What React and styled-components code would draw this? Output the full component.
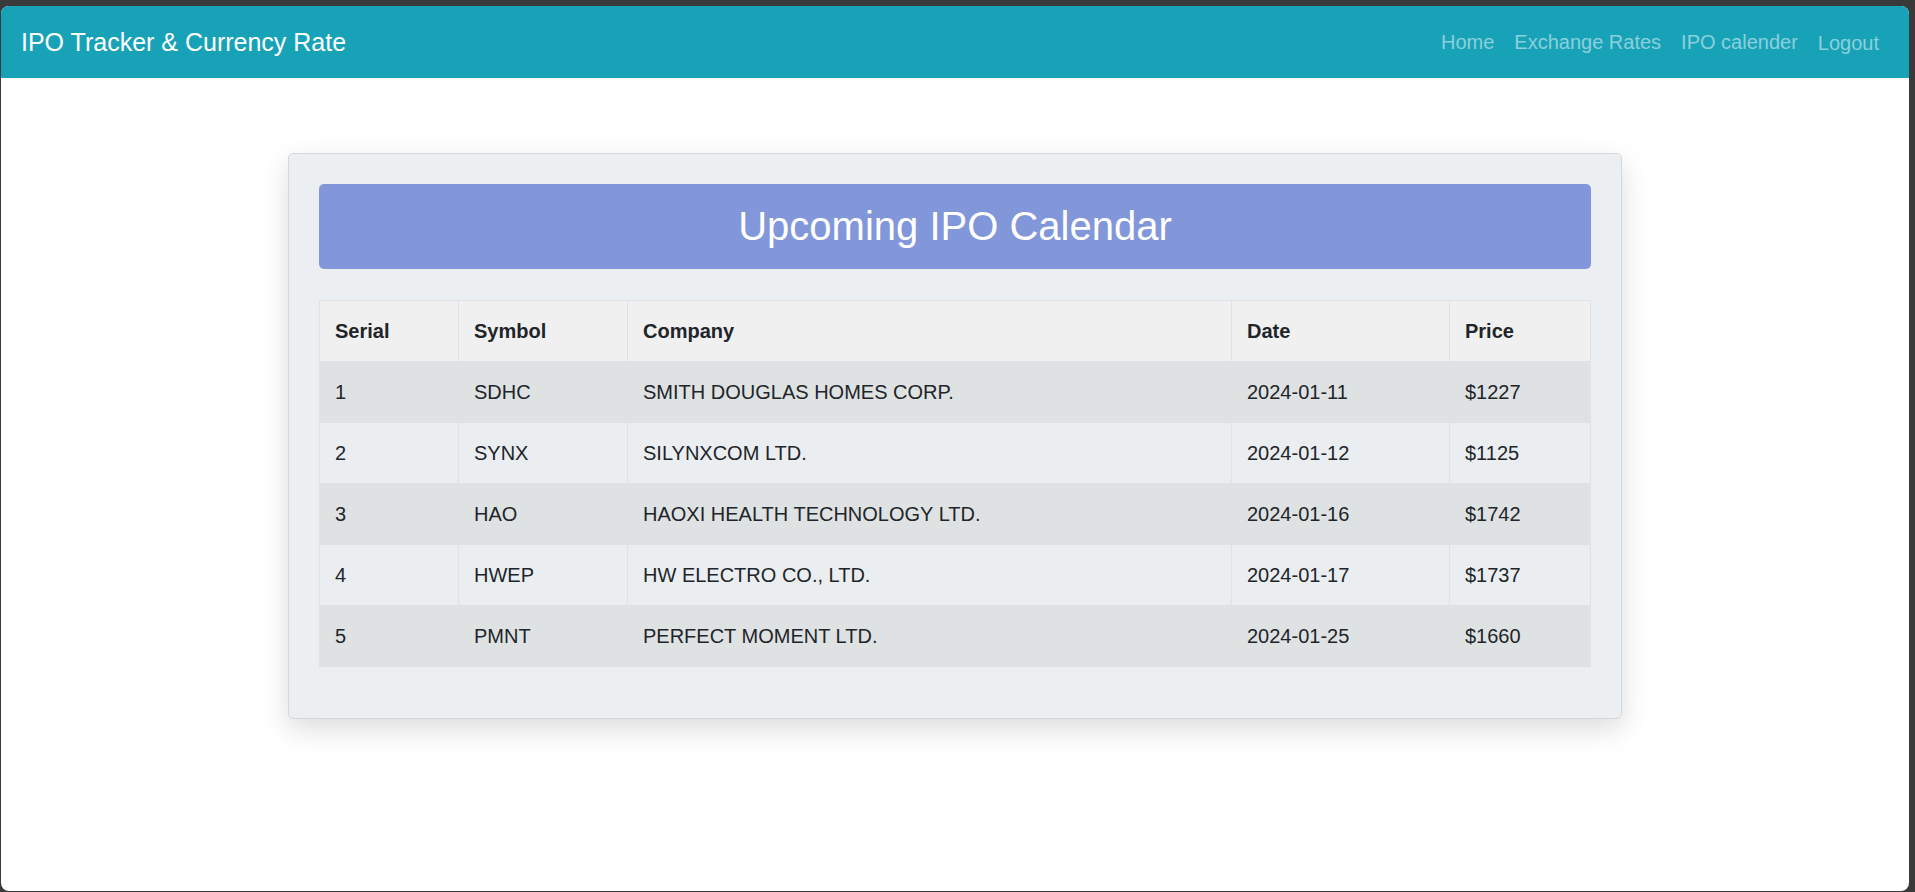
import React from "react";
import styled, { createGlobalStyle } from "styled-components";

const GlobalStyle = createGlobalStyle`
  html, body {
    margin: 0;
    padding: 0;
    background: #3a3a3a;
    font-family: "Liberation Sans", Arial, sans-serif;
    color: #212529;
  }
  * { box-sizing: border-box; }
`;

const Frame = styled.div`
  margin: 6px 6px 1px 1px;
  height: calc(100vh - 7px);
  background: #ffffff;
  border-radius: 8px;
  overflow: hidden;
`;

const Navbar = styled.nav`
  height: 72px;
  background: #17a2b8;
  display: flex;
  align-items: center;
  justify-content: space-between;
  padding: 0 20px;
`;

const Brand = styled.a`
  color: #ffffff;
  font-size: 25px;
  line-height: 30px;
  text-decoration: none;
`;

const NavList = styled.div`
  display: flex;
  align-items: center;
`;

const NavLink = styled.a`
  color: rgba(255, 255, 255, 0.5);
  font-size: 20px;
  line-height: 30px;
  padding: ${(p) => (p.$button ? "2px 10px 0 10px" : "0 10px")};
  text-decoration: none;
  cursor: pointer;
`;

const Main = styled.main`
  padding-top: 75px;
`;

const Card = styled.section`
  width: 1334px;
  margin: 0 auto;
  padding: 30px 30px 31px 30px;
  background: #eceff1;
  border: 1px solid #d5d8da;
  border-radius: 5px;
  box-shadow: 0 10px 28px rgba(0, 0, 0, 0.14);
`;

const Banner = styled.h1`
  margin: 0 0 31px 0;
  padding: 18px 0 19px;
  background: #8296da;
  border-radius: 5px;
  color: #ffffff;
  font-size: 40px;
  font-weight: 400;
  line-height: 48px;
  text-align: center;
`;

const Table = styled.table`
  width: 100%;
  border-collapse: collapse;
  margin-bottom: 20px;
  font-size: 20px;
  line-height: 30px;
  color: #212529;
`;

const HeadCell = styled.th`
  width: ${(p) => (p.$w ? `${p.$w}px` : "auto")};
  padding: 15px;
  text-align: left;
  font-weight: 700;
  background: #f0f0f0;
  border: 1px solid #dee2e6;
`;

const Row = styled.tr`
  background: ${(p) => (p.$odd ? "#dfe2e3" : "#ebeef0")};
`;

const Cell = styled.td`
  padding: 15px;
  border: 1px solid #dee2e6;
  border-top: none;
`;

const columns = [
  { label: "Serial", w: 139 },
  { label: "Symbol", w: 169 },
  { label: "Company", w: 604 },
  { label: "Date", w: 218 },
  { label: "Price" },
];

const ipos = [
  { symbol: "SDHC", company: "SMITH DOUGLAS HOMES CORP.", date: "2024-01-11", price: "$1227" },
  { symbol: "SYNX", company: "SILYNXCOM LTD.", date: "2024-01-12", price: "$1125" },
  { symbol: "HAO", company: "HAOXI HEALTH TECHNOLOGY LTD.", date: "2024-01-16", price: "$1742" },
  { symbol: "HWEP", company: "HW ELECTRO CO., LTD.", date: "2024-01-17", price: "$1737" },
  { symbol: "PMNT", company: "PERFECT MOMENT LTD.", date: "2024-01-25", price: "$1660" },
];

export default function App() {
  return (
    <>
      <GlobalStyle />
      <Frame>
        <Navbar>
          <Brand>IPO Tracker &amp; Currency Rate</Brand>
          <NavList>
            <NavLink>Home</NavLink>
            <NavLink>Exchange Rates</NavLink>
            <NavLink>IPO calender</NavLink>
            <NavLink $button>Logout</NavLink>
          </NavList>
        </Navbar>
        <Main>
          <Card>
            <Banner>Upcoming IPO Calendar</Banner>
            <Table>
              <thead>
                <tr>
                  {columns.map((c) => (
                    <HeadCell key={c.label} $w={c.w}>
                      {c.label}
                    </HeadCell>
                  ))}
                </tr>
              </thead>
              <tbody>
                {ipos.map((ipo, i) => (
                  <Row key={ipo.symbol} $odd={i % 2 === 0}>
                    <Cell>{i + 1}</Cell>
                    <Cell>{ipo.symbol}</Cell>
                    <Cell>{ipo.company}</Cell>
                    <Cell>{ipo.date}</Cell>
                    <Cell>{ipo.price}</Cell>
                  </Row>
                ))}
              </tbody>
            </Table>
          </Card>
        </Main>
      </Frame>
    </>
  );
}
